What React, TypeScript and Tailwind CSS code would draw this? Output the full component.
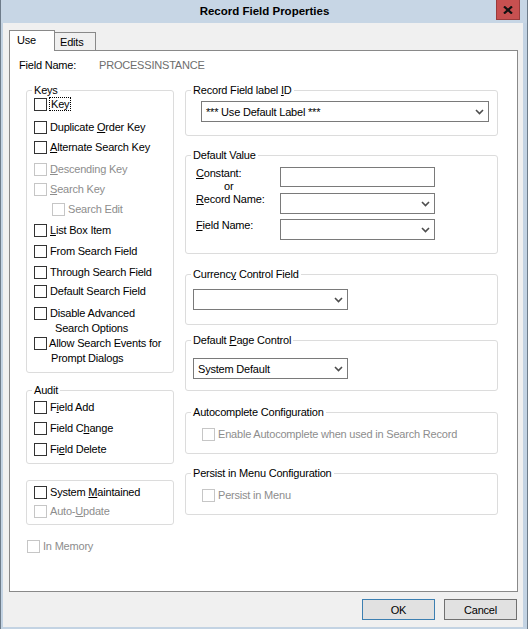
import React from "react";

type CheckProps = {
  children: React.ReactNode;
  disabled?: boolean;
  className?: string;
};

function Box({ disabled }: { disabled?: boolean }) {
  return (
    <span
      className={`block h-[13px] w-[13px] shrink-0 border bg-white ${
        disabled ? "border-[#c6c6c6]" : "border-[#333333]"
      }`}
    />
  );
}

function Check({ children, disabled, className = "" }: CheckProps) {
  return (
    <div
      className={`flex h-[14px] items-center gap-[3px] ${
        disabled ? "text-[#8d8d8d]" : "text-black"
      } ${className}`}
    >
      <Box disabled={disabled} />
      <span className="whitespace-nowrap leading-[14px]">{children}</span>
    </div>
  );
}

function Group({
  title,
  className = "",
  children,
}: {
  title?: React.ReactNode;
  className?: string;
  children: React.ReactNode;
}) {
  return (
    <fieldset className={`rounded-[3px] border border-[#dcdcdc] ${className}`}>
      {title && <legend className="ml-[5px] px-[2px] leading-[14px]">{title}</legend>}
      {children}
    </fieldset>
  );
}

function Chevron() {
  return (
    <svg width="9" height="6" viewBox="0 0 9 6" className="shrink-0">
      <polyline points="1,1 4.5,4.5 8,1" fill="none" stroke="#4d4d4d" strokeWidth="1.6" />
    </svg>
  );
}

function Select({ value = "", className = "" }: { value?: string; className?: string }) {
  return (
    <div
      className={`flex items-center justify-between border border-[#7a7a7a] bg-white pl-[4px] pr-[4px] ${className}`}
    >
      <span className="whitespace-nowrap leading-[14px]">{value}</span>
      <Chevron />
    </div>
  );
}

export default function App() {
  return (
    <div className="flex h-[629px] w-[528px] flex-col border-x border-[#6e7c8a] bg-[#c3d3e3] font-['Liberation_Sans',Arial,sans-serif] text-[11px] tracking-[-0.2px] text-black">
      {/* title bar */}
      <div className="flex h-[23px] shrink-0 items-start bg-[#c7d6e5]">
        <div className="w-[32px]" />
        <div className="flex-1 pt-[4px] text-center text-[11.5px] font-bold leading-[15px] tracking-normal">
          Record Field Properties
        </div>
        <div className="mr-[7px] flex h-[20px] w-[24px] items-center justify-center border border-t-0 border-[#9a3b3b] bg-[#c75050]">
          <svg width="10" height="8" viewBox="0 0 10 8">
            <path d="M1 0.5 L9 7.5 M9 0.5 L1 7.5" stroke="#111" strokeWidth="2.2" />
          </svg>
        </div>
      </div>

      {/* body */}
      <div className="flex pl-[2px] pr-[4px]">
        <div className="flex h-[604px] w-[520px] flex-col bg-[#f0f0f0] pl-[6px] pt-[7px]">
          {/* tabs */}
          <div className="flex h-[20px] items-start">
            <div className="relative z-10 h-[21px] w-[46px] border border-b-0 border-[#898989] bg-white pl-[7px] pt-[2px] leading-[14px]">
              Use
            </div>
            <div className="mt-[2px] h-[18px] w-[41px] border border-l-0 border-b-0 border-[#898989] bg-[#f0f0f0] pl-[5px] pt-[2px] leading-[14px]">
              Edits
            </div>
          </div>

          {/* panel */}
          <div className="h-[542px] w-[509px] border border-[#898989] bg-white">
            <div className="mt-[7px] flex pl-[9px] leading-[14px]">
              <span className="w-[80px]">Field Name:</span>
              <span className="text-[#6d6d6d]">PROCESSINSTANCE</span>
            </div>

            <div className="mt-[11px] flex gap-[11px] pl-[16px]">
              {/* left column */}
              <div className="flex w-[148px] flex-col">
                <Group title="Keys">
                  <div className="flex flex-col pb-[6px] pl-[7px]">
                    <div className="flex h-[14px] items-center gap-[2px]">
                      <Box />
                      <span className="border border-dotted border-black px-[1px] leading-[12px]">Key</span>
                    </div>
                    <Check className="mt-[9px]">
                      Duplicate <u>O</u>rder Key
                    </Check>
                    <Check className="mt-[6px]">
                      <u>A</u>lternate Search Key
                    </Check>
                    <Check className="mt-[8px]" disabled>
                      <u>D</u>escending Key
                    </Check>
                    <Check className="mt-[6px]" disabled>
                      <u>S</u>earch Key
                    </Check>
                    <Check className="ml-[18px] mt-[6px]" disabled>
                      Search Edit
                    </Check>
                    <Check className="mt-[7px]">
                      <u>L</u>ist Box Item
                    </Check>
                    <Check className="mt-[7px]">From Search Field</Check>
                    <Check className="mt-[7px]">Through Search Field</Check>
                    <Check className="mt-[5px]">Default Search Field</Check>
                    <div className="mt-[8px] flex items-start gap-[3px]">
                      <div className="mt-[1px]">
                        <Box />
                      </div>
                      <div className="flex flex-col leading-[15px]">
                        <span>Disable Advanced</span>
                        <span className="pl-[5px]">Search Options</span>
                      </div>
                    </div>
                    <div className="flex items-start gap-[2px]">
                      <div className="mt-[1px]">
                        <Box />
                      </div>
                      <div className="flex flex-col leading-[15px]">
                        <span className="whitespace-nowrap">Allow Search Events for</span>
                        <span className="pl-[2px]">Prompt Dialogs</span>
                      </div>
                    </div>
                  </div>
                </Group>

                <Group title="Audit" className="mt-[10px]">
                  <div className="flex flex-col pb-[7px] pl-[7px]">
                    <Check className="mt-[3px]">
                      F<u>i</u>eld Add
                    </Check>
                    <Check className="mt-[7px]">
                      Field C<u>h</u>ange
                    </Check>
                    <Check className="mt-[7px]">
                      Fi<u>e</u>ld Delete
                    </Check>
                  </div>
                </Group>

                <Group className="mt-[16px]">
                  <div className="flex flex-col pb-[6px] pl-[7px] pt-[4px]">
                    <Check>
                      System <u>M</u>aintained
                    </Check>
                    <Check className="mt-[5px]" disabled>
                      Auto-<u>U</u>pdate
                    </Check>
                  </div>
                </Group>

                <Check className="ml-[1px] mt-[14px]" disabled>
                  In Memory
                </Check>
              </div>

              {/* right column */}
              <div className="flex w-[313px] flex-col">
                <Group
                  title={
                    <>
                      Record Field label <u>I</u>D
                    </>
                  }
                >
                  <div className="pb-[13px] pl-[15px] pt-[4px]">
                    <Select value="*** Use Default Label ***" className="h-[21px] w-[288px]" />
                  </div>
                </Group>

                <Group title="Default Value" className="mt-[12px]">
                  <div className="flex pb-[13px] pl-[10px] pt-[5px]">
                    <div className="flex w-[84px] flex-col leading-[13px]">
                      <span>
                        <u>C</u>onstant:
                      </span>
                      <span className="pl-[28px]">or</span>
                      <span>
                        <u>R</u>ecord Name:
                      </span>
                      <span className="mt-[13px]">
                        <u>F</u>ield Name:
                      </span>
                    </div>
                    <div className="flex w-[155px] flex-col">
                      <div className="h-[20px] border border-[#7a7a7a] bg-white" />
                      <Select className="mt-[6px] h-[21px]" />
                      <Select className="mt-[5px] h-[21px]" />
                    </div>
                  </div>
                </Group>

                <Group
                  title={
                    <>
                      Currenc<u>y</u> Control Field
                    </>
                  }
                  className="mt-[13px]"
                >
                  <div className="pb-[14px] pl-[7px] pt-[8px]">
                    <Select className="h-[21px] w-[155px]" />
                  </div>
                </Group>

                <Group
                  title={
                    <>
                      Default <u>P</u>age Control
                    </>
                  }
                  className="mt-[8px]"
                >
                  <div className="pb-[11px] pl-[7px] pt-[11px]">
                    <Select value="System Default" className="h-[21px] w-[155px]" />
                  </div>
                </Group>

                <Group title="Autocomplete Configuration" className="mt-[14px]">
                  <div className="pb-[12px] pl-[16px] pt-[8px]">
                    <Check disabled>Enable Autocomplete when used in Search Record</Check>
                  </div>
                </Group>

                <Group title="Persist in Menu Configuration" className="mt-[12px]">
                  <div className="pb-[12px] pl-[16px] pt-[8px]">
                    <Check disabled>Persist in Menu</Check>
                  </div>
                </Group>
              </div>
            </div>
          </div>

          {/* buttons */}
          <div className="mt-[7px] flex w-[509px] justify-end gap-[9px] pr-[1px]">
            <button className="h-[21px] w-[73px] border border-[#3c7fb1] bg-[#e1e1e1] leading-[14px]">
              OK
            </button>
            <button className="h-[21px] w-[73px] border border-[#707070] bg-[#e1e1e1] leading-[14px]">
              Cancel
            </button>
          </div>
        </div>
      </div>
    </div>
  );
}
